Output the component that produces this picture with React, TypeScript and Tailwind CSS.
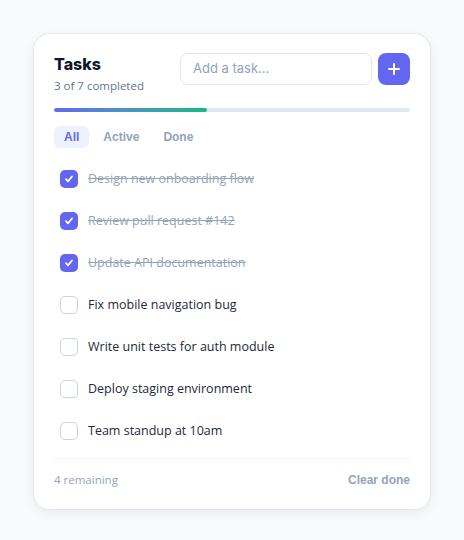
import React, { useState } from "react";

type Task = { id: number; text: string; done: boolean };

const initial: Task[] = [
  { id: 1, text: "Design new onboarding flow", done: true },
  { id: 2, text: "Review pull request #142", done: true },
  { id: 3, text: "Update API documentation", done: true },
  { id: 4, text: "Fix mobile navigation bug", done: false },
  { id: 5, text: "Write unit tests for auth module", done: false },
  { id: 6, text: "Deploy staging environment", done: false },
  { id: 7, text: "Team standup at 10am", done: false },
];

export default function App() {
  const [tasks] = useState<Task[]>(initial);
  const done = tasks.filter((t) => t.done).length;
  const pct = (done / tasks.length) * 100;
  return (
    <div
      className="min-h-screen flex items-start justify-center pt-[33px] bg-[#f8fafc]"
      style={{ fontFamily: '"Open Sans", "Noto Sans", sans-serif' }}
    >
      <div className="w-[398px] bg-white rounded-2xl border border-[#e2e8f0] shadow-[0_4px_12px_rgba(15,23,42,0.06)] px-5 pt-[19px] pb-5">
        <div className="flex items-start justify-between">
          <div>
            <div className="text-[16px] font-extrabold text-[#0f172a] leading-[22px]" style={{ fontFamily: 'Inter, sans-serif' }}>Tasks</div>
            <div className="text-[11.5px] text-[#64748b] leading-[18px] mt-[2px]">3 of 7 completed</div>
          </div>
          <div className="flex gap-1.5">
            <div className="w-[192px] h-8 rounded-lg border border-[#e2e8f0] flex items-center px-3 text-[13px] text-[#94a3b8]" style={{ fontFamily: 'Inter, sans-serif' }}>
              Add a task...
            </div>
            <div className="w-8 h-8 rounded-lg bg-[#6366f1] flex items-center justify-center">
              <svg width="12" height="12" viewBox="0 0 12 12">
                <path d="M6 1v10M1 6h10" stroke="white" strokeWidth="2" strokeLinecap="round" />
              </svg>
            </div>
          </div>
        </div>
        <div className="mt-[13px] h-1 rounded-full bg-[#e2e8f0] overflow-hidden">
          <div className="h-full rounded-full bg-gradient-to-r from-[#6366f1] to-[#10b981]" style={{ width: `${pct}%` }} />
        </div>
        <div className="mt-[14px] flex gap-1 text-[12px] font-bold" style={{ fontFamily: '"Liberation Sans", Arial, sans-serif' }}>
          <div className="px-[10px] h-[22px] flex items-center rounded-md bg-[#eef2ff] text-[#6366f1]">All</div>
          <div className="px-[10px] h-[22px] flex items-center rounded-md text-[#94a3b8]">Active</div>
          <div className="px-[10px] h-[22px] flex items-center rounded-md text-[#94a3b8]">Done</div>
        </div>
        <div className="mt-[10px] flex flex-col">
          {tasks.map((t) => (
            <div key={t.id} className="h-[42px] flex items-center gap-[10px] px-1.5">
              {t.done ? (
                <div className="w-[18px] h-[18px] rounded-[5px] bg-[#6366f1] flex items-center justify-center">
                  <svg width="10" height="10" viewBox="0 0 10 10">
                    <path d="M2 5.2l2 2.1L8 2.5" stroke="white" strokeWidth="1.8" fill="none" strokeLinecap="round" strokeLinejoin="round" />
                  </svg>
                </div>
              ) : (
                <div className="w-[18px] h-[18px] rounded-[5px] border-[1.5px] border-[#cbd5e1]" />
              )}
              <span className={t.done ? "text-[12.5px] text-[#94a3b8] line-through" : "text-[12.5px] text-[#1e293b]"}>{t.text}</span>
            </div>
          ))}
        </div>
        <div className="mt-[6px] border-t border-[#f1f5f9] pt-[12px] flex items-center justify-between">
          <span className="text-[11.5px] text-[#94a3b8]">4 remaining</span>
          <span className="text-[12px] font-bold text-[#94a3b8]" style={{ fontFamily: '"Liberation Sans", Arial, sans-serif' }}>Clear done</span>
        </div>
      </div>
    </div>
  );
}
